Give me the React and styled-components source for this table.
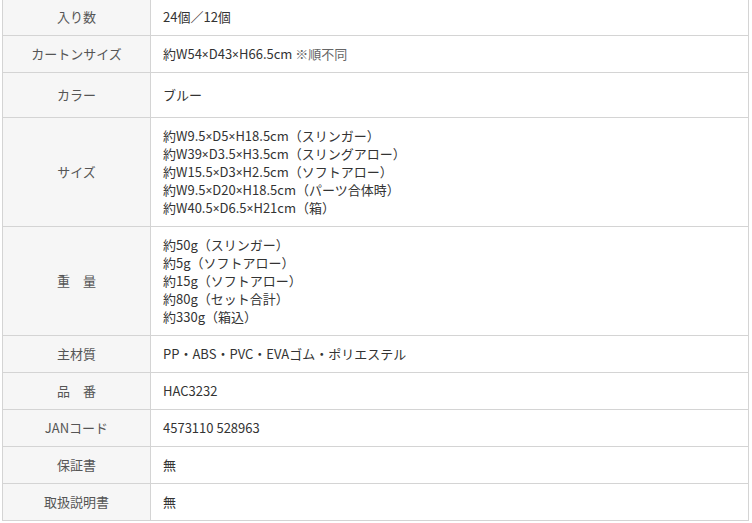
import React from "react";
import styled, { createGlobalStyle } from "styled-components";

const Global = createGlobalStyle`
  html, body { margin: 0; padding: 0; background: #fff; }
  body { font-family: "Noto Sans CJK JP", "Noto Sans", sans-serif; font-size: 13px; }
`;

const Table = styled.div`
  width: 747px;
  margin: -2px 0 0 2px;
  box-sizing: border-box;
  border-left: 1px solid #d4d4d4;
  border-right: 1px solid #d4d4d4;
  border-bottom: 1px solid #d4d4d4;
`;

const Row = styled.div`
  display: grid;
  grid-template-columns: 148px 1fr;
  border-top: 1px solid #d4d4d4;
  min-height: ${(p) => p.$min || 36}px;
`;

const Label = styled.div`
  background: #f6f6f6;
  border-right: 1px solid #d4d4d4;
  color: #555;
  display: flex;
  align-items: center;
  justify-content: center;
  line-height: 18px;
  padding: 9px 4px;
`;

const Value = styled.div`
  color: #333;
  line-height: 18px;
  padding: 9px 12px;
  display: flex;
  flex-direction: column;
  justify-content: center;
`;

const Line = styled.div`
  height: 18px;
  line-height: 18px;
  white-space: nowrap;
`;

const Note = styled.span`
  color: #666;
`;

const Times = styled.span`
  font-family: "Noto Sans", "DejaVu Sans", sans-serif;
  font-size: 12px;
  line-height: 0;
`;

function withTimes(text) {
  if (typeof text !== "string") return text;
  const parts = text.split("×");
  return parts.map((p, i) => (
    <React.Fragment key={i}>
      {p}
      {i < parts.length - 1 && <Times>×</Times>}
    </React.Fragment>
  ));
}

const rows = [
  { label: "入り数", lines: ["24個／12個"] },
  { label: "カートンサイズ", lines: [<>{withTimes("約W54×D43×H66.5cm")} <Note>※順不同</Note></>] },
  { label: "カラー", lines: ["ブルー"], min: 44 },
  {
    label: "サイズ",
    lines: [
      "約W9.5×D5×H18.5cm（スリンガー）",
      "約W39×D3.5×H3.5cm（スリングアロー）",
      "約W15.5×D3×H2.5cm（ソフトアロー）",
      "約W9.5×D20×H18.5cm（パーツ合体時）",
      "約W40.5×D6.5×H21cm（箱）",
    ],
  },
  {
    label: "重　量",
    lines: ["約50g（スリンガー）", "約5g（ソフトアロー）", "約15g（ソフトアロー）", "約80g（セット合計）", "約330g（箱込）"],
  },
  { label: "主材質", lines: ["PP・ABS・PVC・EVAゴム・ポリエステル"] },
  { label: "品　番", lines: ["HAC3232"] },
  { label: "JANコード", lines: ["4573110 528963"] },
  { label: "保証書", lines: ["無"] },
  { label: "取扱説明書", lines: ["無"] },
];

export default function App() {
  return (
    <>
      <Global />
      <Table>
        {rows.map((r, i) => (
          <Row key={i} $min={r.min}>
            <Label>{r.label}</Label>
            <Value>
              {r.lines.map((l, j) => (
                <Line key={j}>{withTimes(l)}</Line>
              ))}
            </Value>
          </Row>
        ))}
      </Table>
    </>
  );
}
